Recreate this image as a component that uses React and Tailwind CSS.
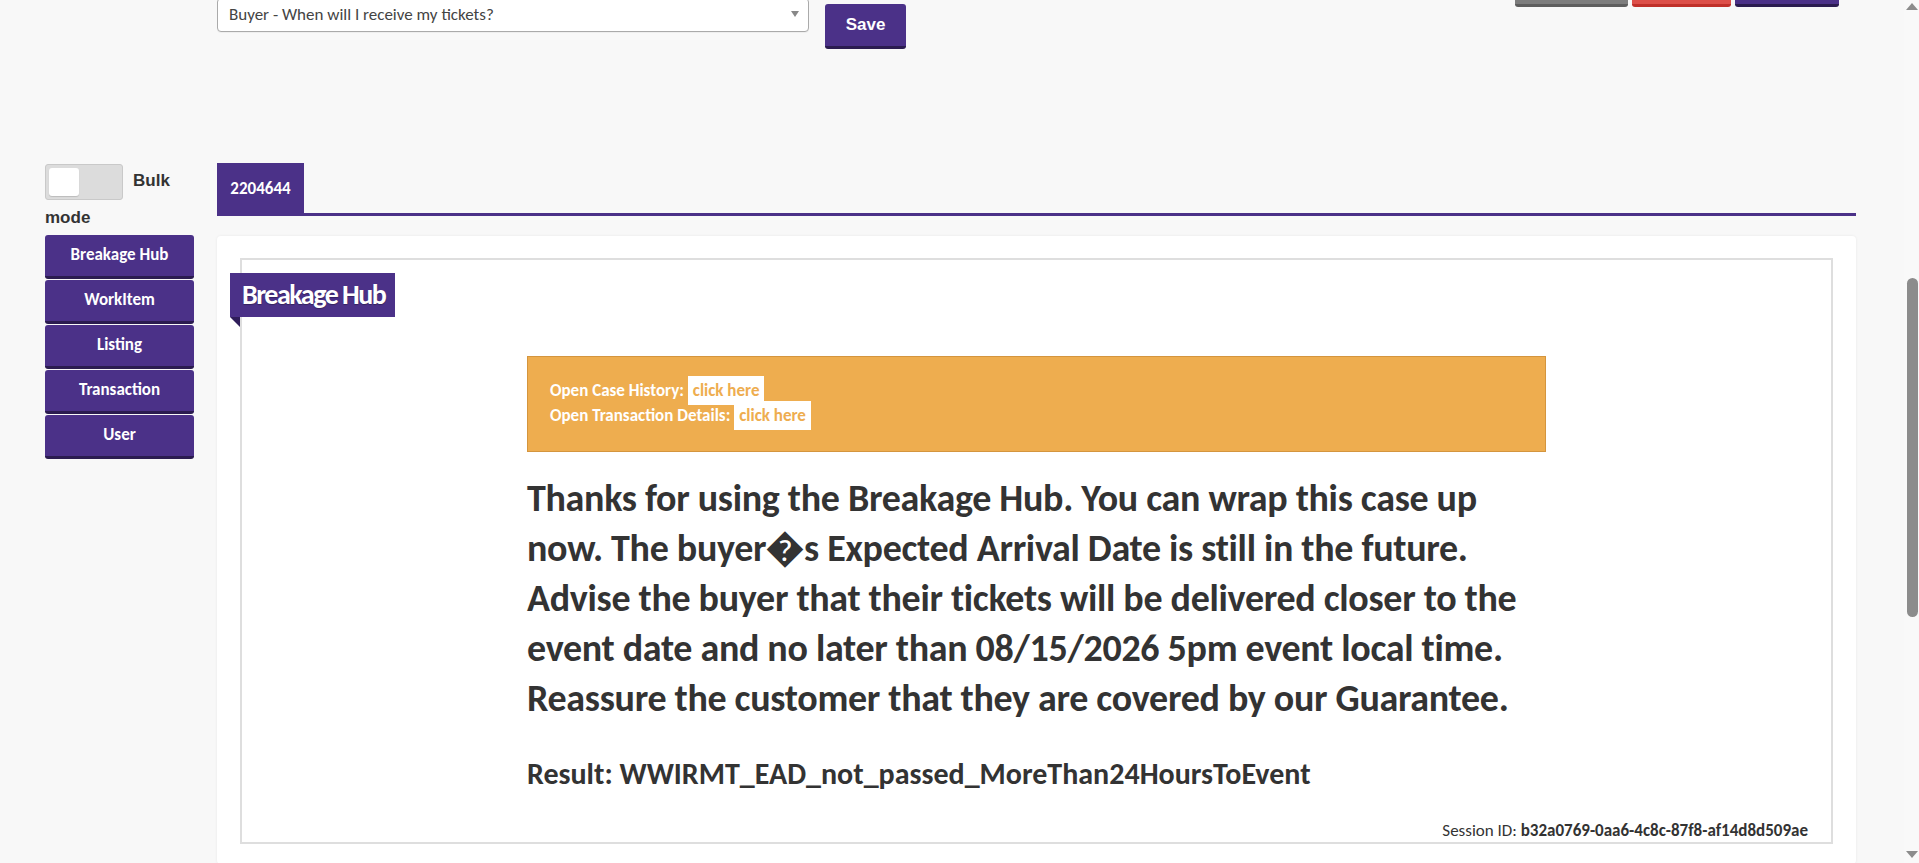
import React from 'react';

const SideButton = ({ label }) => (
  <button className="mb-px flex h-[44px] w-full items-center justify-center rounded-[3px] border-b-[3px] border-[#2b1c50] bg-[#4b3188] font-['Carlito','Calibri','Lato',sans-serif] text-[17px] font-bold text-white">
    {label}
  </button>
);

const ClickHere = () => (
  <span className="bg-white px-[5px] py-[4px] text-[#eead4f]">click here</span>
);

export default function App() {
  return (
    <div className="min-h-screen overflow-hidden bg-[#f8f8f8] pr-[15px] font-['Liberation_Sans',Arial,sans-serif] text-[#333]">
      {/* Top bar: template select + save, action buttons (scrolled partly out of view) */}
      <div className="-mt-[2px] flex items-start pl-[217px] pr-[65px]">
        <div className="relative flex h-[34px] w-[592px] items-center rounded-[4px] border border-[#aaa] bg-white pl-[11px] font-['Carlito','Calibri','Lato',sans-serif] text-[17px] text-[#444] shadow-[0_1px_0_rgba(0,0,0,0.04)]">
          Buyer - When will I receive my tickets?
          <span className="absolute right-[9px] top-[12px] h-0 w-0 border-x-[4px] border-t-[6px] border-x-transparent border-t-[#888]" />
        </div>
        <button className="ml-[16px] mt-[6px] h-[45px] w-[81px] rounded-[3px] border-b-[3px] border-[#2b1c50] bg-[#4b3188] text-[17px] font-bold text-white">
          Save
        </button>
        <div className="flex-1" />
        <div className="-mt-[27px] flex gap-[4px]">
          <button className="h-[36px] w-[113px] rounded-[3px] border-b-[3px] border-[#5e5e5e] bg-[#7d7d7d]" />
          <button className="h-[36px] w-[99px] rounded-[3px] border-b-[3px] border-[#c0302a] bg-[#dd4f49]" />
          <button className="h-[36px] w-[104px] rounded-[3px] border-b-[3px] border-[#2b1c50] bg-[#4b3188]" />
        </div>
      </div>

      <div className="mt-[114px] flex pl-[45px] pr-[48px]">
        {/* Sidebar */}
        <div className="w-[149px] shrink-0">
          <div className="text-[17px] font-bold leading-[35px] text-[#333]">
            <span className="mr-[10px] inline-block h-[36px] w-[78px] rounded-[3px] border border-[#c9c9c9] bg-[#dcdcdc] p-[3px] align-middle">
              <span className="block h-[28px] w-[30px] rounded-[3px] bg-white shadow-[0_1px_1px_rgba(0,0,0,0.15)]" />
            </span>
            Bulk mode
          </div>
          <div>
            <SideButton label="Breakage Hub" />
            <SideButton label="WorkItem" />
            <SideButton label="Listing" />
            <SideButton label="Transaction" />
            <SideButton label="User" />
          </div>
        </div>

        {/* Main */}
        <div className="ml-[23px] flex-1">
          <div className="flex border-b-[3px] border-[#4b3188]">
            <div className="flex h-[50px] w-[87px] items-center justify-center bg-[#4b3188] pt-[2px] font-['Carlito','Calibri','Lato',sans-serif] text-[17px] font-bold text-white">
              2204644
            </div>
          </div>

          <div className="mt-[20px] rounded-[4px] bg-white px-[23px] pb-[20px] pt-[22px] shadow-[0_0_3px_rgba(0,0,0,0.07)]">
            <div className="border-2 border-[#dedede] pt-[13px] font-['Carlito','Calibri','Lato',sans-serif]">
              <div className="relative -ml-[12px] inline-flex h-[44px] items-center bg-[#4b3188] pl-[12px] pr-[10px] text-[28px] font-bold tracking-[-1.5px] text-white [text-shadow:0_1px_1px_rgba(0,0,0,0.3)]">
                Breakage Hub
                <span className="absolute left-0 top-full h-0 w-0 border-l-[10px] border-t-[10px] border-l-transparent border-t-[#2f1d5a]" />
              </div>

              <div className="mx-auto mt-[39px] w-[1019px]">
                <div className="h-[96px] border border-[#d4953e] bg-[#eead4f] pl-[22px] pt-[21px] text-[17px] font-bold leading-[25px] text-white">
                  <div>
                    Open Case History: <ClickHere />
                  </div>
                  <div>
                    Open Transaction Details: <ClickHere />
                  </div>
                </div>

                <p className="mt-[21px] text-[38px] font-bold leading-[50px] tracking-[-0.3px] text-[#333]">
                  Thanks for using the Breakage Hub. You can wrap this case up now. The buyer�s Expected
                  Arrival Date is still in the future. Advise the buyer that their tickets will be delivered
                  closer to the event date and no later than 08/15/2026 5pm event local time. Reassure the
                  customer that they are covered by our Guarantee.
                </p>

                <p className="mt-[33px] text-[30px] font-bold leading-[36px] text-[#333]">
                  Result: WWIRMT_EAD_not_passed_MoreThan24HoursToEvent
                </p>
              </div>

              <div className="mt-[28px] pr-[23px] text-right text-[17px] leading-[22px] text-[#333]">
                Session ID: <span className="font-bold">b32a0769-0aa6-4c8c-87f8-af14d8d509ae</span>
              </div>
            </div>
          </div>
        </div>
      </div>

      {/* Browser scrollbar */}
      <div className="fixed right-0 top-0 flex h-screen w-[15px] flex-col items-center bg-[#f9f9f9]">
        <span className="mt-[3px] h-0 w-0 border-x-[6px] border-b-[7px] border-x-transparent border-b-[#8c8c8c]" />
        <span className="ml-px mt-[268px] h-[339px] w-[11px] rounded-full bg-[#8c8c8c]" />
        <div className="flex-1" />
        <span className="mb-[5px] h-0 w-0 border-x-[6px] border-t-[7px] border-x-transparent border-t-[#8c8c8c]" />
      </div>
    </div>
  );
}
